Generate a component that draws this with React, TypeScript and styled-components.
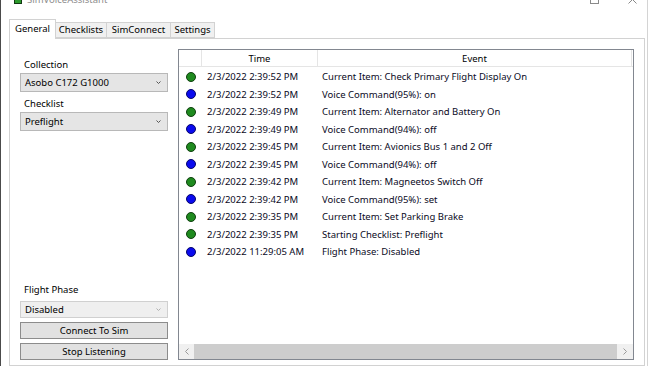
import React from 'react';
import styled, { createGlobalStyle } from 'styled-components';

const Global = createGlobalStyle`
  html, body { margin: 0; padding: 0; background: #ffffff; }
  body {
    width: 654px; height: 366px; overflow: hidden;
    font-family: "Noto Sans", "DejaVu Sans", sans-serif;
    font-size: 9.5px; color: #000;
  }
`;

const Window = styled.div`
  width: 648px; height: 366px; box-sizing: border-box;
  border-left: 1px solid #4a4a4a; border-right: 1px solid #d4d4d4;
  padding: 0 2px 0 8px;
  display: flex; flex-direction: column; background: #fff; overflow: hidden;
`;

const TitleBar = styled.div`
  height: 7px; display: flex; align-items: flex-end; overflow: hidden;
  padding-left: 5px; flex-shrink: 0;
`;

const TitleIcon = styled.div`
  width: 6px; height: 12px; background: #2c9a2c; border: 1px solid #123a12;
  margin-bottom: 3px;
`;

const TitleText = styled.span`
  margin-left: 5px; color: #8c8c8c; font-size: 9.5px; line-height: 14px;
`;

const Spacer = styled.div`flex: 1;`;

const MaxBox = styled.div`
  width: 7px; height: 9px; border: 1px solid #8a8a8a; margin-bottom: 3px;
`;

const CloseGlyph = styled.svg`
  margin: 0 8px 3px 29px; display: block;
`;

const TabStrip = styled.div`
  height: 31px; display: flex; align-items: flex-end; flex-shrink: 0;
`;

const Tab = styled.div<{ $w: number; $active?: boolean; $first?: boolean }>`
  width: ${p => p.$w}px; box-sizing: border-box;
  height: ${p => (p.$active ? 20 : 16)}px;
  margin-bottom: ${p => (p.$active ? -1 : 0)}px;
  position: relative; z-index: ${p => (p.$active ? 2 : 1)};
  background: ${p => (p.$active ? '#ffffff' : '#f0f0f0')};
  border: 1px solid #d2d2d2;
  border-bottom: ${p => (p.$active ? 'none' : '1px solid #d2d2d2')};
  border-left-width: ${p => (p.$first ? 1 : 0)}px;
  display: flex; align-items: center; justify-content: center;
  padding-bottom: ${p => (p.$active ? 2 : 0)}px;
  font-size: 9.5px; line-height: 14px; color: #000; white-space: nowrap;
`;

const TabPage = styled.div`
  flex: 1; border: 1px solid #d2d2d2; background: #fff;
  padding: 10px 10px 0 10px; display: flex; gap: 10px; align-items: flex-start;
`;

const LeftPanel = styled.div`
  width: 148px; height: 311px; flex-shrink: 0;
  display: flex; flex-direction: column; justify-content: space-between;
`;

const Group = styled.div<{ $top?: number }>`
  display: flex; flex-direction: column;
  padding-top: ${p => p.$top ?? 0}px;
`;

const FieldLabel = styled.div<{ $mb: number; $mt?: number }>`
  height: 14px; line-height: 14px; font-size: 9.5px;
  padding-left: 4px;
  margin-bottom: ${p => p.$mb}px; margin-top: ${p => p.$mt ?? 0}px;
`;

const Combo = styled.div<{ $h: number; $disabled?: boolean }>`
  height: ${p => p.$h}px; box-sizing: border-box;
  background: ${p => (p.$disabled ? '#efefef' : '#e5e5e5')};
  border: 1px solid ${p => (p.$disabled ? '#d0d0d0' : '#b8b8b8')};
  display: flex; align-items: center; justify-content: space-between;
  padding: 0 6px 0 4px; font-size: 9.5px; line-height: 14px; color: #000;
`;

const Chevron = styled.svg`display: block;`;

const PushButton = styled.div`
  height: 17px; box-sizing: border-box; margin-top: 4px;
  background: #e1e1e1; border: 1px solid #8c8c8c;
  display: flex; align-items: center; justify-content: center;
  font-size: 9.5px; line-height: 14px; color: #000;
`;

const ListView = styled.div`
  flex: 1; height: 311px; box-sizing: border-box;
  border: 1px solid #828790; display: flex; flex-direction: column;
  background: #fff;
`;

const Header = styled.div`
  height: 17px; box-sizing: border-box; display: flex;
  border-bottom: 1px solid #e5e5e5; flex-shrink: 0;
`;

const HeaderCell = styled.div<{ $w: number }>`
  width: ${p => p.$w}px; box-sizing: border-box; flex-shrink: 0;
  border-right: 1px solid #e5e5e5;
  text-align: center; font-size: 9.5px; line-height: 17px; color: #000;
`;

const Body = styled.div`
  flex: 1; display: flex; flex-direction: column; overflow: hidden;
  padding-top: 1px;
`;

const Row = styled.div`
  height: 17.5px; display: flex; align-items: center; flex-shrink: 0;
  font-size: 9.5px; color: #0a0a24; white-space: nowrap;
`;

const DotCell = styled.div`
  width: 23px; flex-shrink: 0; display: flex; padding-left: 7px; box-sizing: border-box;
`;

const Dot = styled.div<{ $kind: 'green' | 'blue' }>`
  width: 10px; height: 10px; border-radius: 50%; box-sizing: border-box;
  background: ${p => (p.$kind === 'green' ? '#1e8a1e' : '#0a0aee')};
  border: 1px solid ${p => (p.$kind === 'green' ? '#0f3f0f' : '#06066a')};
`;

const TimeCell = styled.div`
  width: 116px; flex-shrink: 0; padding-left: 5px; box-sizing: border-box;
`;

const EventCell = styled.div`
  padding-left: 4px;
`;

const HScroll = styled.div`
  height: 15px; display: flex; flex-shrink: 0; background: #f0f0f0;
`;

const ScrollBtn = styled.div<{ $w: number }>`
  width: ${p => p.$w}px; flex-shrink: 0; background: #f0f0f0;
  display: flex; align-items: center; justify-content: center;
`;

const Thumb = styled.div`
  flex: 1; background: #cdcdcd;
`;

const tabs = [
  { label: 'General', w: 47 },
  { label: 'Checklists', w: 51 },
  { label: 'SimConnect', w: 64 },
  { label: 'Settings', w: 44 },
];

type Ev = { k: 'green' | 'blue'; t: string; e: string };
const events: Ev[] = [
  { k: 'green', t: '2/3/2022 2:39:52 PM', e: 'Current Item: Check Primary Flight Display On' },
  { k: 'blue', t: '2/3/2022 2:39:52 PM', e: 'Voice Command(95%): on' },
  { k: 'green', t: '2/3/2022 2:39:49 PM', e: 'Current Item: Alternator and Battery On' },
  { k: 'blue', t: '2/3/2022 2:39:49 PM', e: 'Voice Command(94%): off' },
  { k: 'green', t: '2/3/2022 2:39:45 PM', e: 'Current Item: Avionics Bus 1 and 2 Off' },
  { k: 'blue', t: '2/3/2022 2:39:45 PM', e: 'Voice Command(94%): off' },
  { k: 'green', t: '2/3/2022 2:39:42 PM', e: 'Current Item: Magneetos Switch Off' },
  { k: 'blue', t: '2/3/2022 2:39:42 PM', e: 'Voice Command(95%): set' },
  { k: 'green', t: '2/3/2022 2:39:35 PM', e: 'Current Item: Set Parking Brake' },
  { k: 'green', t: '2/3/2022 2:39:35 PM', e: 'Starting Checklist: Preflight' },
  { k: 'blue', t: '2/3/2022 11:29:05 AM', e: 'Flight Phase: Disabled' },
];

const DownChevron = ({ color }: { color: string }) => (
  <Chevron width="5" height="3" viewBox="0 0 5 3">
    <polyline points="0.5,0.5 2.5,2.5 4.5,0.5" fill="none" stroke={color} strokeWidth="1" />
  </Chevron>
);

export default function App() {
  return (
    <>
      <Global />
      <Window>
        <TitleBar>
          <TitleIcon />
          <TitleText>SimVoiceAssistant</TitleText>
          <Spacer />
          <MaxBox />
          <CloseGlyph width="9" height="9" viewBox="0 0 9 9">
            <path d="M0.5 0.5 L8.5 8.5 M8.5 0.5 L0.5 8.5" stroke="#8a8a8a" strokeWidth="1" />
          </CloseGlyph>
        </TitleBar>
        <TabStrip>
          {tabs.map((t, i) => (
            <Tab key={t.label} $w={t.w} $active={i === 0} $first={i === 0}>
              {t.label}
            </Tab>
          ))}
        </TabStrip>
        <TabPage>
          <LeftPanel>
            <Group $top={9}>
              <FieldLabel $mb={1}>Collection</FieldLabel>
              <Combo $h={19}>
                <span>Asobo C172 G1000</span>
                <DownChevron color="#555" />
              </Combo>
              <FieldLabel $mb={1} $mt={5}>Checklist</FieldLabel>
              <Combo $h={19}>
                <span>Preflight</span>
                <DownChevron color="#555" />
              </Combo>
            </Group>
            <Group>
              <FieldLabel $mb={4}>Flight Phase</FieldLabel>
              <Combo $h={17} $disabled>
                <span>Disabled</span>
                <DownChevron color="#b0b0b0" />
              </Combo>
              <PushButton>Connect To Sim</PushButton>
              <PushButton>Stop Listening</PushButton>
            </Group>
          </LeftPanel>
          <ListView>
            <Header>
              <HeaderCell $w={23} />
              <HeaderCell $w={116}>Time</HeaderCell>
              <HeaderCell $w={314}>Event</HeaderCell>
            </Header>
            <Body>
              {events.map((ev, i) => (
                <Row key={i}>
                  <DotCell><Dot $kind={ev.k} /></DotCell>
                  <TimeCell>{ev.t}</TimeCell>
                  <EventCell>{ev.e}</EventCell>
                </Row>
              ))}
            </Body>
            <HScroll>
              <ScrollBtn $w={15}>
                <svg width="4" height="7" viewBox="0 0 4 7">
                  <polyline points="3.5,0.5 0.5,3.5 3.5,6.5" fill="none" stroke="#9a9a9a" strokeWidth="1" />
                </svg>
              </ScrollBtn>
              <Thumb />
              <ScrollBtn $w={16}>
                <svg width="4" height="7" viewBox="0 0 4 7">
                  <polyline points="0.5,0.5 3.5,3.5 0.5,6.5" fill="none" stroke="#9a9a9a" strokeWidth="1" />
                </svg>
              </ScrollBtn>
            </HScroll>
          </ListView>
        </TabPage>
      </Window>
    </>
  );
}
